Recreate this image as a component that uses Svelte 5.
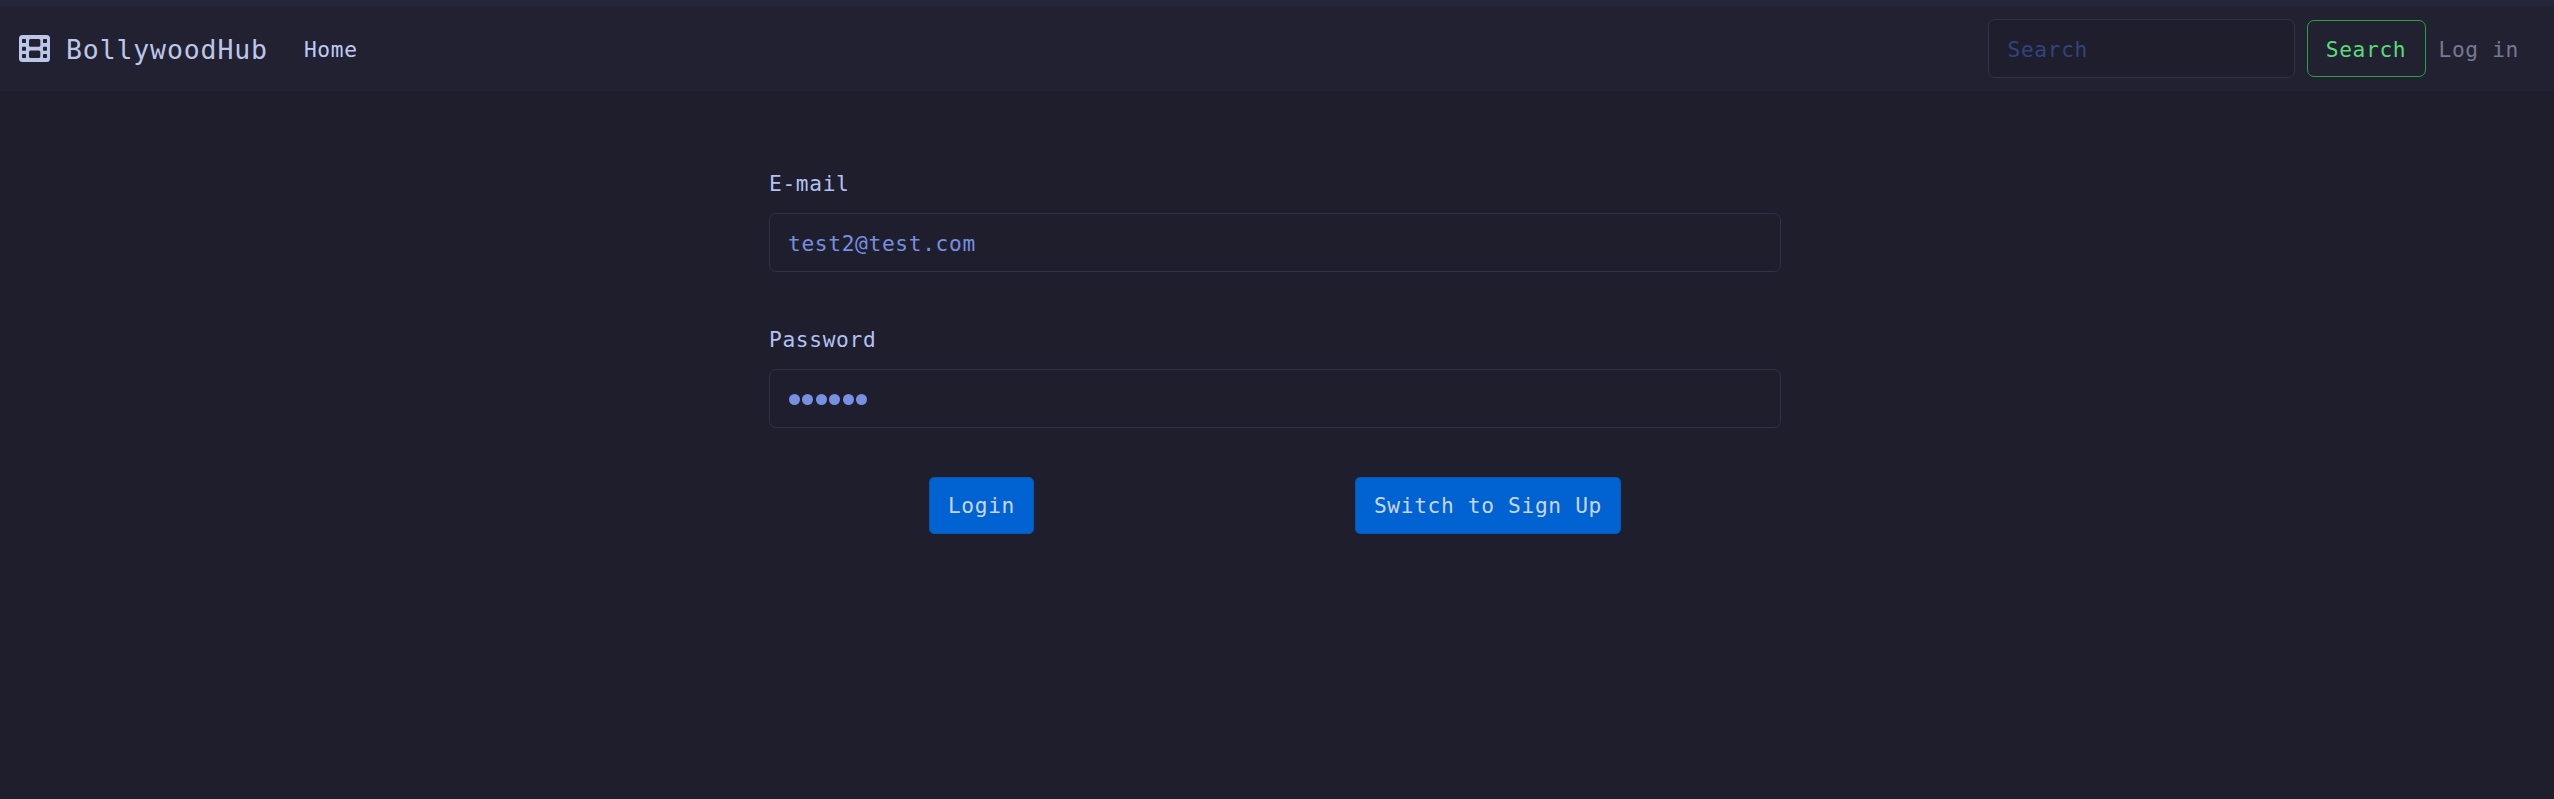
<script>
  let email = $state('test2@test.com');
  const dots = [0, 1, 2, 3, 4, 5];
  const holes = [4, 11.7, 19];
</script>

<div class="page">
  <nav>
    <span class="brand">
      <svg class="film" viewBox="0 0 31 27" aria-hidden="true">
        <rect width="31" height="27" rx="3.5" fill="currentColor" />
        <g fill="#222132">
          {#each holes as y (y)}
            <rect x="3" {y} width="4" height="4" rx="0.7" />
            <rect x="24" {y} width="4" height="4" rx="0.7" />
          {/each}
          <rect x="10" y="4" width="11.3" height="7.7" rx="1.5" />
          <rect x="10" y="15.4" width="11.3" height="7.7" rx="1.5" />
        </g>
      </svg>
      <span class="name">BollywoodHub</span>
    </span>
    <span class="home">Home</span>
    <div class="tools">
      <input class="search" placeholder="Search" />
      <button class="find">Search</button>
      <span class="login">Log in</span>
    </div>
  </nav>

  <main>
    <label for="email">E-mail</label>
    <input id="email" bind:value={email} />
    <span class="label">Password</span>
    <div class="field">
      {#each dots as dot (dot)}<i></i>{/each}
    </div>
    <div class="actions">
      <div><button class="primary">Login</button></div>
      <div><button class="primary">Switch to Sign Up</button></div>
    </div>
  </main>
</div>

<style>
  :global(body) { background: #1f1e2d; }
  .page {
    box-sizing: border-box;
    height: 799px;
    border-top: 6px solid #24273a;
    background: #1f1e2d;
    color: #b2c1f4;
    font: 21.2px/36px "DejaVu Sans Mono", monospace;
    letter-spacing: 0.66px;
    overflow: hidden;
  }
  nav {
    box-sizing: border-box;
    height: 85px;
    padding: 0 35px 0 19px;
    display: flex;
    align-items: center;
    background: #222132;
  }
  .brand { display: flex; align-items: center; gap: 16px; color: #bcc6e7; font-size: 26.5px; letter-spacing: 0.87px; }
  .film { width: 31px; height: 27px; }
  .name { padding-top: 2px; }
  .home { margin-left: 36px; padding-top: 2px; color: #bfcbf3; }
  .tools { margin-left: auto; display: flex; align-items: center; }
  input, .field {
    box-sizing: border-box;
    width: 100%;
    height: 59px;
    padding: 2px 18px 0;
    border: 1px solid #32304a;
    border-radius: 7px;
    background: #1f1e2d;
    color: #768fe0;
    font: inherit;
    letter-spacing: inherit;
    display: block;
    outline: none;
  }
  input::placeholder { color: #32437f; opacity: 1; }
  .search { width: 307px; padding-left: 19px; }
  button { box-sizing: border-box; height: 57px; padding: 1px 18px 0; font: inherit; letter-spacing: inherit; border-radius: 7px; }
  .find { width: 119px; margin: 0 13px 0 12px; padding-top: 2px; border: 1px solid #26a33f; background: transparent; color: #59db79; }
  .login { padding-top: 2px; color: #757990; }
  main { width: 1012px; margin: 74px 0 0 769px; }
  label, .label { box-sizing: border-box; display: block; height: 48px; padding-top: 1px; }
  .label { margin-top: 49px; }
  .field { display: flex; align-items: center; gap: 2.4px; padding-left: 19px; color: #7790e2; }
  .field i { width: 11px; height: 11px; border-radius: 50%; background: currentColor; }
  .actions { display: grid; grid-template-columns: 425px 588px; margin-top: 49px; text-align: center; }
  .primary { border: 1px solid #0758b4; border-radius: 5px; background: #0063d1; color: #c9d5f4; }
</style>
